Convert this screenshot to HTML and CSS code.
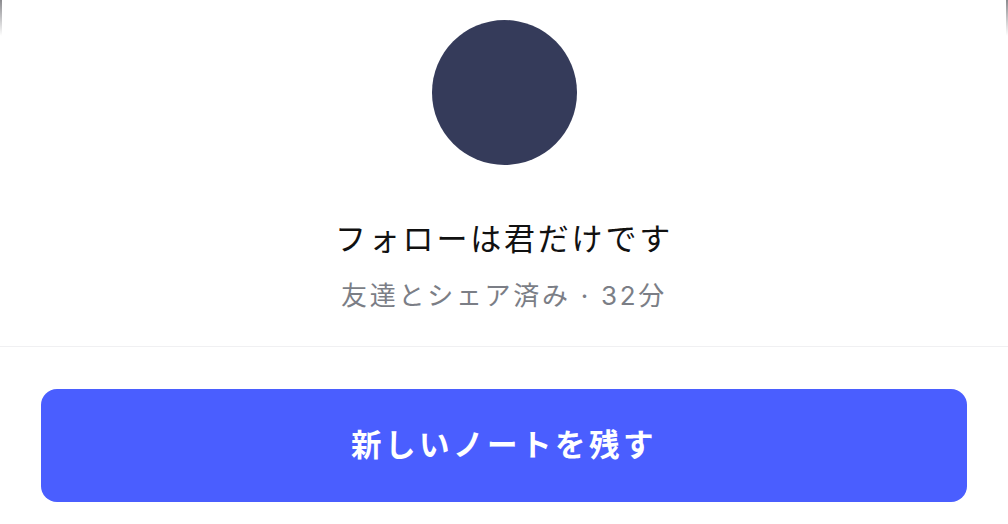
FILE: index.html
```html
<!DOCTYPE html>
<html lang="ja">
<head>
<meta charset="utf-8">
<link rel="stylesheet" href="styles.css">
</head>
<body>
<div class="sheet">
  <section class="profile">
    <div class="avatar"></div>
    <h1 class="title">フォローは君だけです</h1>
    <p class="meta">友達とシェア済み · 32分</p>
  </section>
  <div class="actions">
    <button class="primary">新しいノートを残す</button>
  </div>
</div>
</body>
</html>
```
FILE: styles.css
```css
html, body {
  margin: 0;
  padding: 0;
  background: #ffffff;
}
body {
  width: 1008px;
  height: 524px;
  overflow: hidden;
  font-family: "Noto Sans CJK JP", "Noto Sans", sans-serif;
}
.sheet {
  position: relative;
  height: 524px;
  display: flex;
  flex-direction: column;
}
.sheet::before,
.sheet::after {
  content: "";
  position: absolute;
  top: 0;
  width: 2px;
  height: 36px;
  background: linear-gradient(#8a8a8e, rgba(255,255,255,0));
}
.sheet::before { left: 0; }
.sheet::after { right: 0; }
.profile {
  display: flex;
  flex-direction: column;
  align-items: center;
  padding-top: 20px;
  height: 347px;
  box-sizing: border-box;
  border-bottom: 1px solid #f0f0f2;
}
.avatar {
  width: 145px;
  height: 145px;
  border-radius: 50%;
  background: #353b5a;
}
.title {
  margin: 52px 0 0;
  font-size: 31px;
  font-weight: 400;
  letter-spacing: 2.8px;
  line-height: 40px;
  color: #111111;
}
.meta {
  margin: 23px 0 0;
  font-family: "Inter", "Noto Sans CJK JP", sans-serif;
  font-size: 26px;
  line-height: 32px;
  letter-spacing: 2.7px;
  color: #7b7e86;
}
.actions {
  padding: 42px 41px 0 41px;
}
.primary {
  width: 100%;
  height: 113px;
  border: none;
  border-radius: 16px;
  background: #4a5eff;
  color: #ffffff;
  font-family: inherit;
  font-size: 30.5px;
  font-weight: 700;
  letter-spacing: 3.5px;
  line-height: 1;
  padding: 0 0 4px;
}
```
